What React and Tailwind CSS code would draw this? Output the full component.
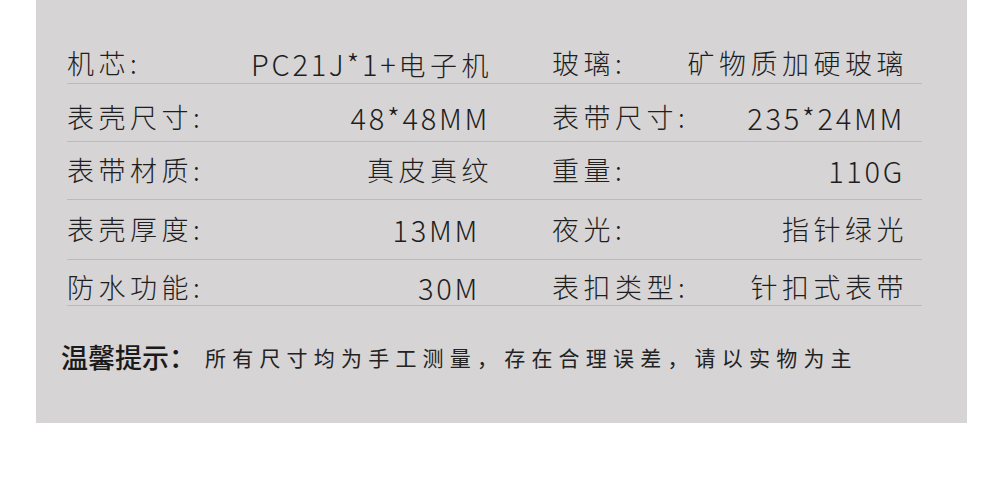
const rows = [
  { l: "机芯:", lv: "PC21J*1+电子机", r: "玻璃:", rv: "矿物质加硬玻璃", cls: "pt-[8px] pb-[5px]", lvc: "" },
  { l: "表壳尺寸:", lv: "48*48MM", r: "表带尺寸:", rv: "235*24MM", cls: "pt-[18px] pb-[9px]", lvc: "" },
  { l: "表带材质:", lv: "真皮真纹", r: "重量:", rv: "110G", cls: "pt-[13px] pb-[14px]", lvc: "" },
  { l: "表壳厚度:", lv: "13MM", r: "夜光:", rv: "指针绿光", cls: "pt-[14px] pb-[15px]", lvc: "pr-[10px]" },
  { l: "防水功能:", lv: "30M", r: "表扣类型:", rv: "针扣式表带", cls: "pt-[12px] pb-[3px]", lvc: "pr-[10px]" },
];

function Mixed({ text }) {
  const parts = text.match(/[\x20-\x7e]+|[^\x20-\x7e]+/g) || [];
  return (
    <>
      {parts.map((p, i) =>
        /^[\x20-\x7e]+$/.test(p) ? (
          <span
            key={i}
            className={
              i === parts.length - 1
                ? "text-[29px] leading-[30px] tracking-[2.7px] pr-[3px]"
                : "text-[29px] leading-[30px] tracking-[2.7px]"
            }
          >
            {p}
          </span>
        ) : (
          <span key={i}>{p}</span>
        )
      )}
    </>
  );
}

export default function App() {
  return (
    <div className="w-[1000px] h-[483px] bg-white" style={{ fontFamily: '"Noto Sans CJK SC", "Noto Sans", sans-serif' }}>
      <div className="ml-[36px] w-[931px] bg-[#d7d4d5] pt-[40px] pb-[51px]">
        <div className="ml-[31px] w-[855px]">
          {rows.map((row, i) => (
            <div key={i} className={`flex border-b border-[#bdbabb] text-[27px] font-light leading-[30px] text-[#1e1e1e] tracking-[4.5px] ${row.cls}`}>
              <div className="w-[426px] h-[30px] flex justify-between">
                <span>{row.l}</span>
                <span className={row.lvc}><Mixed text={row.lv} /></span>
              </div>
              <div className="ml-[59px] w-[356px] h-[30px] flex justify-between">
                <span>{row.r}</span>
                <span><Mixed text={row.rv} /></span>
              </div>
            </div>
          ))}
        </div>
        <div className="mt-[36px] ml-[25px] flex items-center leading-[30px] text-[#1a1a1a]">
          <span className="text-[27px] font-medium">温馨提示：</span>
          <span className="ml-[9px] text-[21px] tracking-[6.2px] text-[#222222]">所有尺寸均为手工测量，存在合理误差，请以实物为主</span>
        </div>
      </div>
    </div>
  );
}
